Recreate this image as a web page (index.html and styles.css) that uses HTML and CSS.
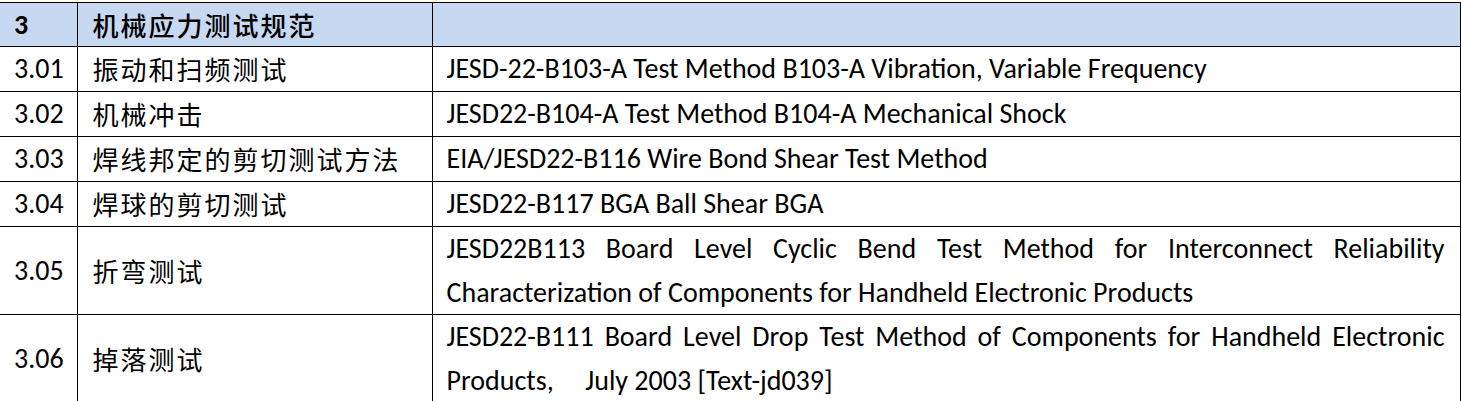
FILE: index.html
```html
<!DOCTYPE html>
<html lang="zh-CN">
<head>
<meta charset="utf-8">
<link rel="stylesheet" href="styles.css">
</head>
<body>
<table class="spec">
  <colgroup>
    <col class="c-num">
    <col class="c-name">
    <col class="c-std">
  </colgroup>
  <tr class="head">
    <td class="num">3</td>
    <td class="name">机械应力测试规范</td>
    <td class="std"></td>
  </tr>
  <tr>
    <td class="num">3.01</td>
    <td class="name">振动和扫频测试</td>
    <td class="std">JESD-22-B103-A Test Method B103-A Vibration, Variable Frequency</td>
  </tr>
  <tr>
    <td class="num">3.02</td>
    <td class="name">机械冲击</td>
    <td class="std">JESD22-B104-A Test Method B104-A Mechanical Shock</td>
  </tr>
  <tr>
    <td class="num">3.03</td>
    <td class="name">焊线邦定的剪切测试方法</td>
    <td class="std">EIA/JESD22-B116 Wire Bond Shear Test Method</td>
  </tr>
  <tr>
    <td class="num">3.04</td>
    <td class="name">焊球的剪切测试</td>
    <td class="std">JESD22-B117 BGA Ball Shear BGA</td>
  </tr>
  <tr class="tall">
    <td class="num">3.05</td>
    <td class="name">折弯测试</td>
    <td class="std">JESD22B113 Board Level Cyclic Bend Test Method for Interconnect Reliability Characterization of Components for Handheld Electronic Products</td>
  </tr>
  <tr class="tall">
    <td class="num">3.06</td>
    <td class="name">掉落测试</td>
    <td class="std">JESD22-B111 Board Level Drop Test Method of Components for Handheld Electronic Products,&nbsp;&nbsp;&nbsp;&nbsp; July 2003 [Text-jd039]</td>
  </tr>
</table>
</body>
</html>
```

FILE: styles.css
```css
html, body {
  margin: 0;
  padding: 0;
  background: #ffffff;
}

body {
  padding-top: 2px;
}

.spec {
  border-collapse: collapse;
  table-layout: fixed;
  width: 1460px;
  color: #000000;
  font-family: "Carlito", "Calibri", "Open Sans", "Noto Sans CJK SC", sans-serif;
}

.c-num { width: 77px; }
.c-name { width: 355px; }
.c-std { width: 1028px; }

.spec td {
  border: 1px solid #000000;
  padding: 0 15px 0 15px;
  height: 44px;
  line-height: 44px;
  vertical-align: middle;
  font-size: 28px;
}

.spec tr td:first-child {
  border-left: none;
  padding-left: 14px;
}

.spec .name {
  font-family: "Noto Sans CJK SC", sans-serif;
  font-size: 26px;
  letter-spacing: 2px;
}

.spec .std {
  text-align: justify;
  padding-left: 14px;
}

.head td {
  background: #c6d9f1;
  height: 43px;
  line-height: 43px;
}

.head .num {
  font-weight: bold;
}

.head .name {
  font-weight: 500;
}

.tall td {
  line-height: 43.5px;
}
```
